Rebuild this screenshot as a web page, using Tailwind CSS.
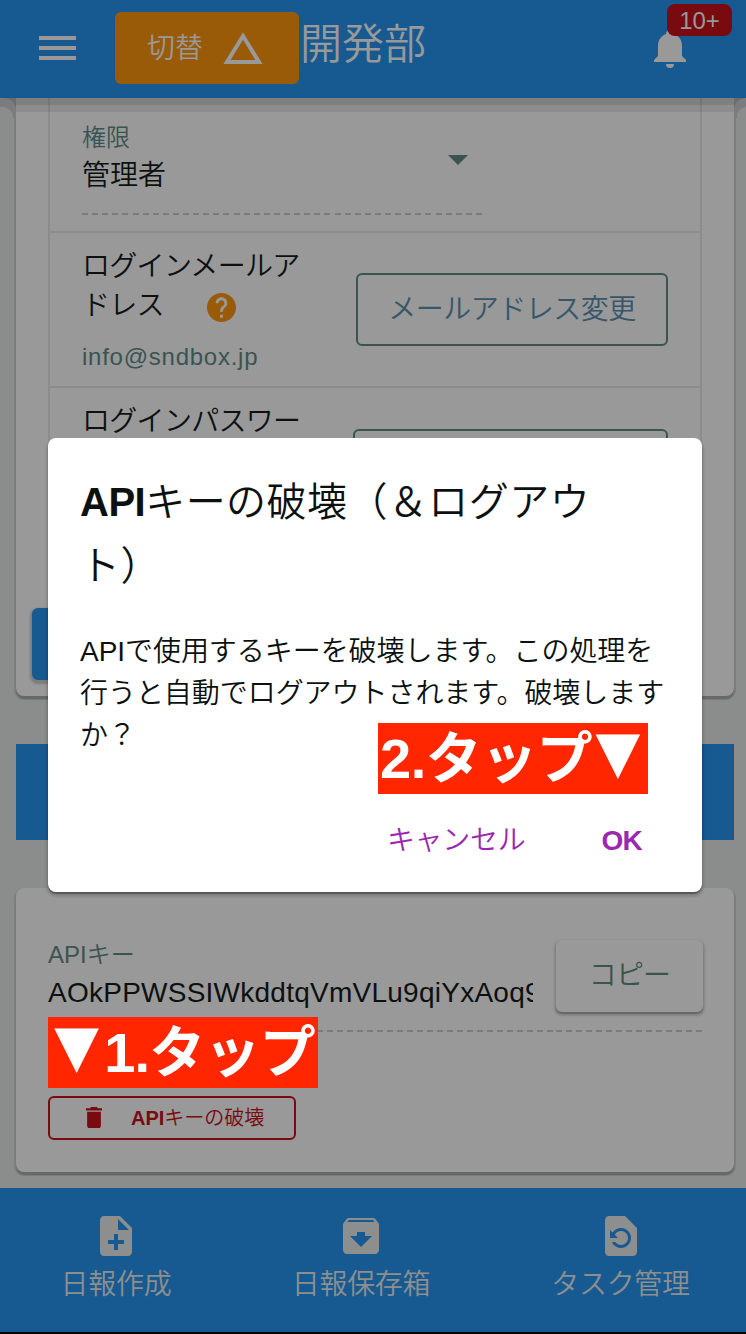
<!DOCTYPE html>
<html lang="ja">
<head>
<meta charset="utf-8">
<title>APIキーの破壊</title>
<script src="https://cdn.jsdelivr.net/npm/@tailwindcss/browser@4"></script>
</head>
<body class="bg-[#8b8d8c]">
<div class="relative flex h-[1334px] w-[746px] flex-col overflow-hidden whitespace-nowrap bg-[#8b8d8c] font-['Liberation_Sans','Noto_Sans_CJK_JP',sans-serif] font-[350] text-[#0c1110]">

  <header class="relative z-10 flex h-[98px] shrink-0 items-start bg-[#175a91] text-[#999]">
    <div class="mt-9 ml-[39px] flex w-[37px] flex-col gap-[6px]">
      <div class="h-1 bg-[#999]"></div><div class="h-1 bg-[#999]"></div><div class="h-1 bg-[#999]"></div>
    </div>
    <button class="mt-3 ml-[39px] flex h-[72px] w-[184px] items-center rounded-[6px] bg-[#9a5b09] pl-8">
      <span class="pt-[2px] text-[28px] leading-[40px]">切替</span>
      <svg class="ml-[20px] h-8 w-10" viewBox="0 0 40 32"><path d="M20 4 L36 30 H4 Z" fill="none" stroke="#999" stroke-width="4"/></svg>
    </button>
    <h1 class="mt-[15px] ml-[1px] text-[42px] leading-[60px]">開発部</h1>
    <svg class="absolute left-[654px] top-[30px] h-[38px] w-8" viewBox="0 0 32 38" fill="#999"><path d="M12 4 C12 1 14 0 16 0 S20 1 20 4 C25 6 28 10 28 16 V26 L32 30 V32 H0 V30 L4 26 V16 C4 10 7 6 12 4Z M12 34 H20 A4 4 0 0 1 12 34Z"/></svg>
    <span class="absolute left-[667px] top-1 flex h-8 w-[65px] items-center justify-center rounded-[8px] bg-[#780a10] pt-[2px] text-[24px]">10+</span>
  </header>

  <main class="relative flex flex-1 flex-col px-4 pr-3">
    <div class="absolute inset-x-0 top-0 h-[7px] bg-black/17"></div>
    <div class="absolute inset-x-0 top-[7px] h-[7px] bg-black/8"></div>
    <section class="h-[598px] shrink-0 rounded-b-[8px] bg-[#999] px-8 shadow-[0_3px_1px_#686868,0_2px_0_2px_#7d7f7e]">
      <div class="h-full border-x-2 border-[#8b8c8c]">
        <div class="flex h-[135px] flex-col border-b-2 border-[#8b8c8c] pt-[22px] pl-8">
          <div class="text-[24px] leading-[36px] text-[#3a5451]">権限</div>
          <div class="flex h-[41px] w-[400px] items-start justify-between pr-[14px]">
            <span class="text-[28px] leading-[40px]">管理者</span>
            <svg class="-mt-px h-[10px] w-5" viewBox="0 0 20 10" fill="#3a5451"><path d="M0 0H20L10 10Z"/></svg>
          </div>
          <div class="mt-4 h-[2px] w-[400px] bg-[repeating-linear-gradient(90deg,#7b7b7b_0_6px,transparent_6px_10.1px)]"></div>
        </div>
        <div class="flex h-[155px] justify-between border-b-2 border-[#8b8c8c] pr-8 pl-8">
          <div class="pt-[14px] text-[28px] leading-[39px]">
            <div class="tracking-[-0.7px]">ログインメールア</div>
            <div class="flex items-center tracking-[-0.7px]">ドレス
              <svg class="ml-[43px] mt-1 h-[29px] w-[29px]" viewBox="2 2 20 20"><path fill="#9a5b09" d="M12 2C6.480 2 2 6.480 2 12s4.480 10 10 10 10-4.480 10-10S17.520 2 12 2zm1 17h-2v-2h2v2zm2.070-7.750l-.9.920C13.450 12.900 13 13.500 13 15h-2v-.5c0-1.100.45-2.100 1.170-2.830l1.240-1.260c.37-.36.59-.86.59-1.410 0-1.100-.9-2-2-2s-2 .9-2 2H8c0-2.210 1.790-4 4-4s4 1.790 4 4c0 .88-.36 1.680-.93 2.250z"/></svg>
            </div>
            <div class="mt-[15px] text-[24px] leading-[34px] tracking-[0.75px] text-[#3a5451]">info@sndbox.jp</div>
          </div>
          <div class="mt-10 flex h-[73px] w-[312px] items-center justify-center rounded-[6px] border-2 border-[#3a5451] text-[28px] tracking-[-0.5px] text-[#36566a]">メールアドレス変更</div>
        </div>
        <div class="flex justify-between pr-8 pl-8">
          <div class="pt-[14px] text-[28px] leading-[39px] tracking-[-0.7px]">ログインパスワー</div>
          <div class="mt-[41px] h-[73px] w-[315px] rounded-[6px] border-2 border-[#3a5451]"></div>
        </div>
      </div>
    </section>
    <div class="absolute left-0 top-0 h-5 w-4 bg-[#6c6c6c]">
      <div class="h-full w-full rounded-tr-[12px] bg-[#7c7c7e] pt-[9px] pr-[3px]"><div class="h-full rounded-tr-[10px] bg-[#8b8d8c]"></div></div>
    </div>
    <div class="absolute right-0 top-0 h-5 w-3 bg-[#6c6c6c]">
      <div class="h-full w-full rounded-tl-[12px] bg-[#7c7c7e] pt-[9px] pl-[3px]"><div class="h-full rounded-tl-[10px] bg-[#8b8d8c]"></div></div>
    </div>
    <div class="absolute left-8 top-[510px] h-[72px] w-40 rounded-[6px] bg-[#175a91] shadow-[0_2px_2px_2px_#7d7d7d]"></div>
    <div class="mt-12 h-24 shrink-0 bg-[#175a91]"></div>
    <section class="mt-12 h-[284px] shrink-0 rounded-[8px] bg-[#999] px-8 pt-[49px] shadow-[0_3px_1px_#686868,0_2px_0_2px_#7d7f7e]">
      <div class="flex h-[93px] justify-between">
        <div class="w-[485px] overflow-hidden">
          <div class="text-[24px] leading-[36px] text-[#3a5451]">APIキー</div>
          <div class="pt-[1px] text-[28px] leading-[38px] tracking-[0.25px]">AOkPPWSSIWkddtqVmVLu9qiYxAoq9</div>
        </div>
        <div class="mt-[3px] -mr-px flex h-[72px] w-[147px] items-center justify-center rounded-[6px] bg-[#999] text-[28px] tracking-[-0.8px] text-[#3a5451] shadow-[0_2px_1px_#686868,0_2px_2px_2px_#858585]">コピー</div>
      </div>
      <div class="h-[2px] bg-[repeating-linear-gradient(90deg,#7b7b7b_0_6px,transparent_6px_9.97px)]"></div>
      <div class="mt-[64px] flex h-11 w-[248px] items-center rounded-[6px] border-2 border-[#780a10] pl-[36px] text-[20px] text-[#780a10]">
        <svg class="-mt-[2px] h-[21px] w-4" viewBox="5 3 14 18" preserveAspectRatio="none" fill="#780a10"><path d="M6 19c0 1.100.9 2 2 2h8c1.100 0 2-.9 2-2V7H6v12zM19 4h-3.500l-1-1h-5l-1 1H5v2h14V4z"/></svg>
        <span class="ml-[29px]"><b class="font-bold">API</b>キーの破壊</span>
      </div>
    </section>
  </main>

  <nav class="relative flex h-[146px] shrink-0 border-b-2 border-black bg-[#175a91] text-[28px] text-[#8d8f8e]">
    <div class="flex w-[232px] shrink-0 flex-col items-center pt-[28px]">
      <svg class="h-10 w-8" viewBox="4 2 16 20" fill="#8d8f8e"><path d="M14 2H6c-1.100 0-2 .9-2 2v16c0 1.100.89 2 2 2H18c1.100 0 2-.9 2-2V8l-6-6zm2 14h-3v3h-2v-3H8v-2h3v-3h2v3h3v2zm-3-7V3.500L18.500 9H13z"/></svg>
      <span class="mt-[9px] leading-[40px] tracking-[-0.3px]">日報作成</span>
    </div>
    <div class="flex w-[258px] shrink-0 flex-col items-center pt-[30px]">
      <svg class="h-9 w-9" viewBox="3 3 18 18" fill="#8d8f8e"><path d="M20.540 5.230l-1.390-1.680C18.880 3.210 18.470 3 18 3H6c-.47 0-.88.21-1.160.55L3.460 5.230C3.170 5.570 3 6.020 3 6.500V19c0 1.100.9 2 2 2h14c1.100 0 2-.9 2-2V6.500c0-.48-.17-.93-.46-1.270zM12 17.500L6.500 12H10v-2h4v2h3.500L12 17.500zM5.120 5l.81-1h12l.94 1H5.120z"/></svg>
      <span class="mt-[11px] leading-[40px] tracking-[-0.3px]">日報保存箱</span>
    </div>
    <div class="flex w-[261px] shrink-0 flex-col items-center pt-[28px]">
      <svg class="h-10 w-8" viewBox="4 2 16 20" fill="#8d8f8e"><path d="M14 2H6c-1.100 0-2 .9-2 2v16c0 1.100.89 2 2 2h12c1.100 0 2-.9 2-2V8l-6-6zm-2 16c-2.050 0-3.810-1.240-4.580-3h1.710c.63.9 1.680 1.500 2.870 1.500 1.930 0 3.500-1.570 3.500-3.500S13.930 9.500 12 9.500c-1.350 0-2.520.78-3.100 1.900l1.600 1.600h-4V9l1.300 1.300C8.690 8.920 10.230 8 12 8c2.760 0 5 2.240 5 5s-2.240 5-5 5z"/></svg>
      <span class="mt-[9px] leading-[40px] tracking-[-0.3px]">タスク管理</span>
    </div>
  </nav>

  <div role="dialog" class="absolute left-12 top-[438px] z-20 flex h-[454px] w-[654px] flex-col rounded-[8px] bg-white px-8 pt-8 shadow-[0_2px_1px_rgba(0,0,0,.35),0_3px_2px_2px_rgba(0,0,0,.12)]">
    <h2 class="text-[40px] leading-[64px] tracking-[0.45px] text-[#0c1110]"><b class="font-bold tracking-[-0.5px]">API</b>キーの破壊（＆ログアウ<br>ト）</h2>
    <p class="mt-[33px] text-[28px] leading-[42px] tracking-[-0.05px]">APIで使用するキーを破壊します。この処理を<br>行うと自動でログアウトされます。破壊します<br>か？</p>
    <div class="mt-auto mb-[31px] flex justify-end pr-[28px] text-[28px] leading-[40px] text-[#9c27b0]">
      <span class="tracking-[-0.3px]">キャンセル</span><b class="ml-[76px] font-bold tracking-[-0.7px]">OK</b>
    </div>
  </div>

  <div class="absolute left-[378px] top-[723px] z-30 flex h-[71px] w-[270px] bg-[#ff2600] pl-[2px] text-[56px] leading-[71px] font-bold text-white"><span class="tracking-[-0.5px]">2.タップ</span><span class="-ml-[12px] text-[76px] leading-[58px]">▼</span></div>
  <div class="absolute left-12 top-[1017px] z-30 flex h-[71px] w-[270px] bg-[#ff2600] text-[56px] leading-[71px] font-bold text-white"><span class="-mr-[10px] -ml-[9px] text-[76px] leading-[57px]">▼</span><span class="tracking-[-0.8px]">1.タップ</span></div>
</div>
</body>
</html>
